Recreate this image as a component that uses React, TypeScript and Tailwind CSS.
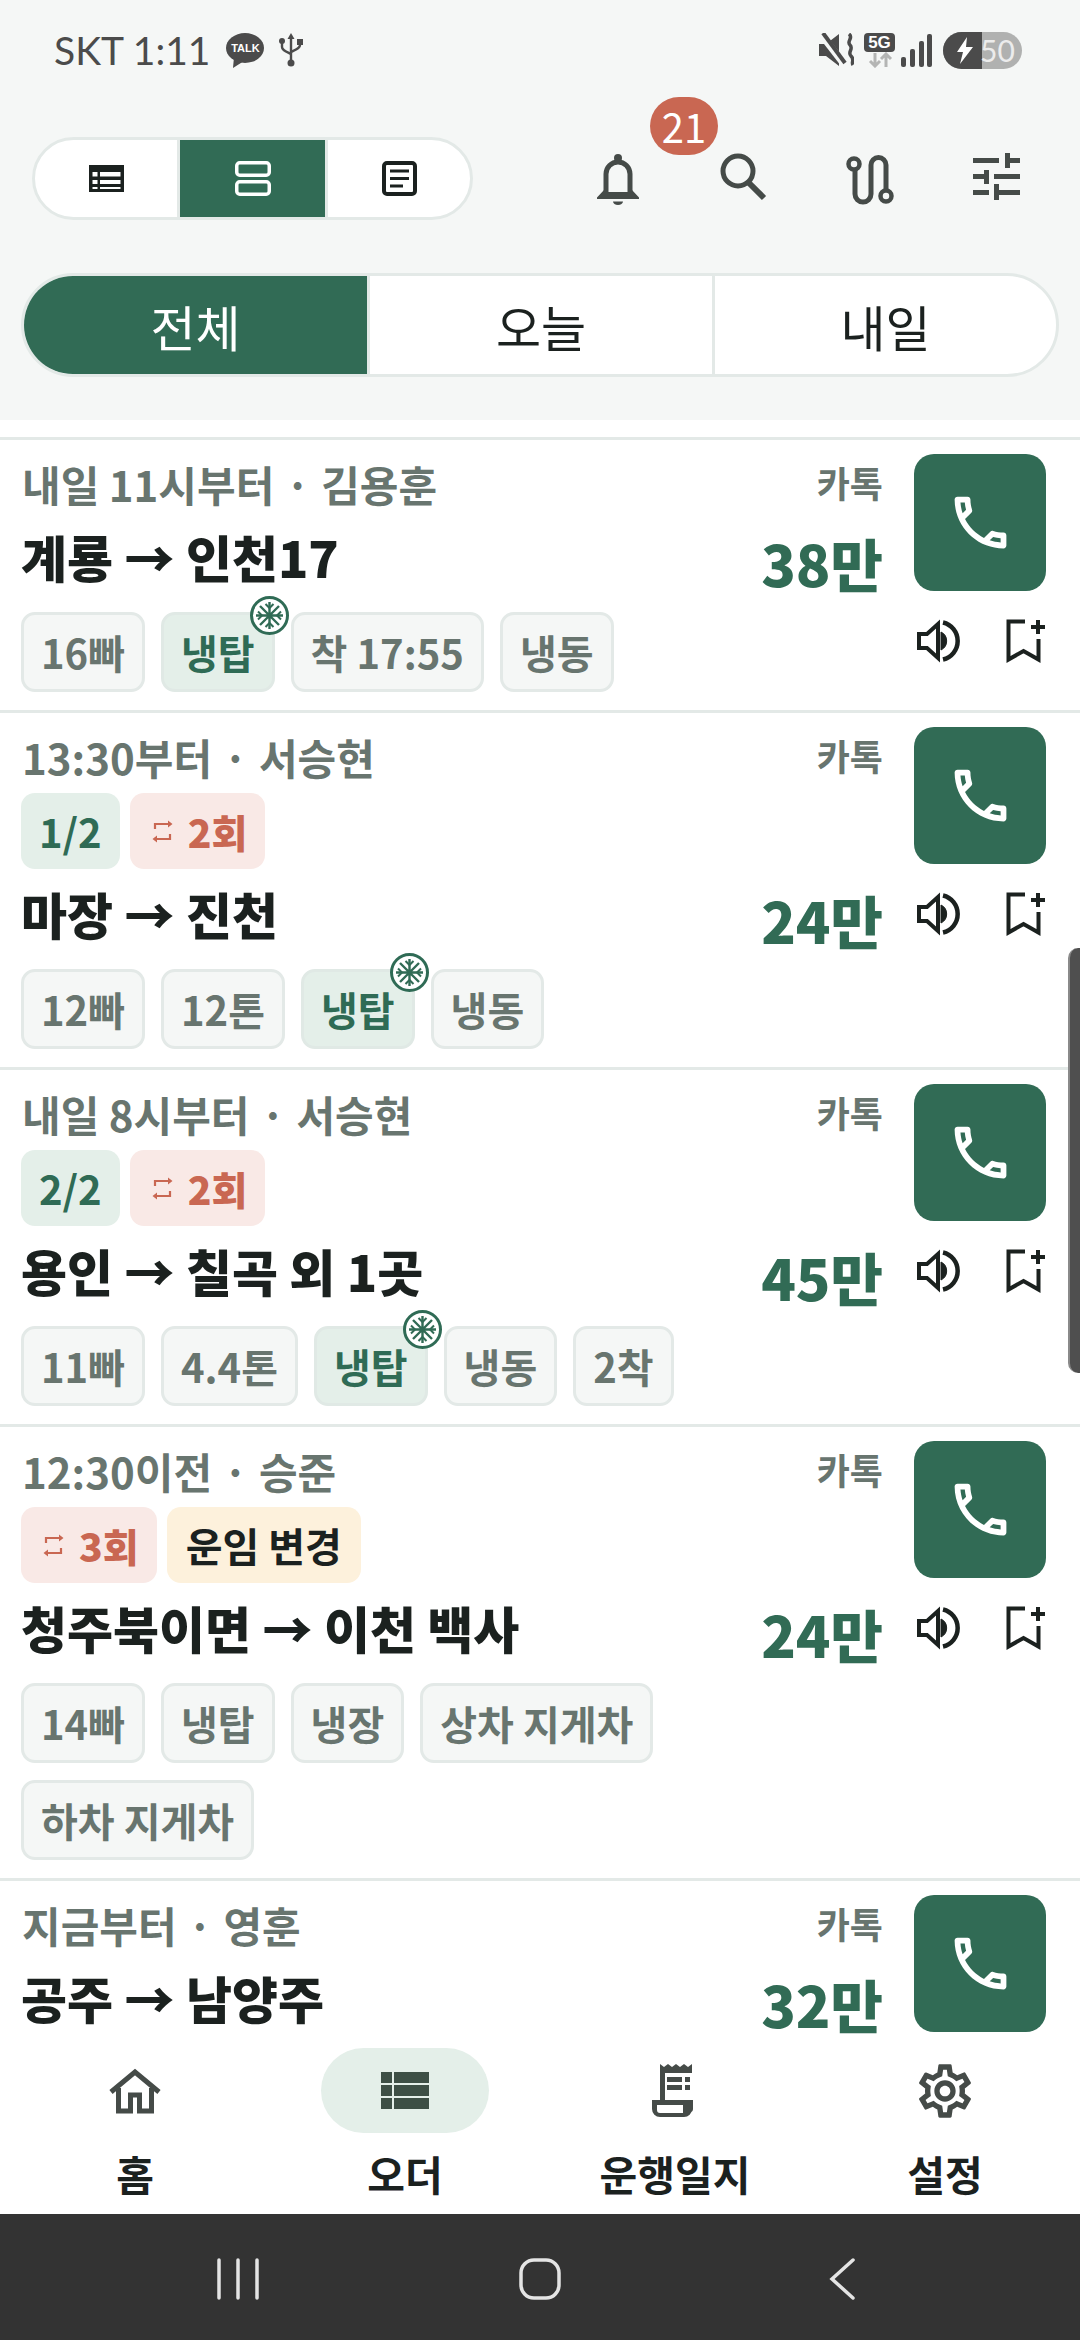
import React from "react";
import { MdOutlineSettings } from "react-icons/md";

const INK = "#1b211f";
const ICON = "#454b48";
const GREEN = "#316b55";
const RED = "#c96752";

type Tag = { t: string; cold?: boolean };
type Order = {
  time: string;
  who: string;
  share?: string;
  repeat?: string;
  note?: string;
  title: string;
  price: string;
  tags: Tag[];
};

const ORDERS: Order[] = [
  {
    time: "내일 11시부터",
    who: "김용훈",
    title: "계룡 → 인천17",
    price: "38만",
    tags: [{ t: "16빠" }, { t: "냉탑", cold: true }, { t: "착 17:55" }, { t: "냉동" }],
  },
  {
    time: "13:30부터",
    who: "서승현",
    share: "1/2",
    repeat: "2회",
    title: "마장 → 진천",
    price: "24만",
    tags: [{ t: "12빠" }, { t: "12톤" }, { t: "냉탑", cold: true }, { t: "냉동" }],
  },
  {
    time: "내일 8시부터",
    who: "서승현",
    share: "2/2",
    repeat: "2회",
    title: "용인 → 칠곡 외 1곳",
    price: "45만",
    tags: [{ t: "11빠" }, { t: "4.4톤" }, { t: "냉탑", cold: true }, { t: "냉동" }, { t: "2착" }],
  },
  {
    time: "12:30이전",
    who: "승준",
    repeat: "3회",
    note: "운임 변경",
    title: "청주북이면 → 이천 백사",
    price: "24만",
    tags: [{ t: "14빠" }, { t: "냉탑" }, { t: "냉장" }, { t: "상차 지게차" }, { t: "하차 지게차" }],
  },
  {
    time: "지금부터",
    who: "영훈",
    title: "공주 → 남양주",
    price: "32만",
    tags: [],
  },
];

function ListIcon({ color, w, h }: { color: string; w: number; h: number }) {
  return (
    <svg width={w} height={h} viewBox="0 0 35 27" fill={color}>
      <path d="M0 0h35v27H0z" />
      <path
        d="M3.500 7h5v4.500h-5zM11 7h20.500v4.500H11zM3.500 15h5v4h-5zM11 15h20.500v4H11zM3.500 22h5v2h-5zM11 22h20.500v2H11z"
        fill="#fff"
      />
    </svg>
  );
}

function CardsIcon() {
  return (
    <svg width="36" height="35" viewBox="0 0 36 35" fill="none" stroke="#fff" strokeWidth="3.500">
      <rect x="1.750" y="1.750" width="32.500" height="12.500" rx="3" />
      <rect x="1.750" y="20.750" width="32.500" height="12.500" rx="3" />
    </svg>
  );
}

function NoteIcon() {
  return (
    <svg width="35" height="35" viewBox="0 0 35 35" fill="none" stroke={INK}>
      <rect x="2" y="2" width="31" height="31" rx="3" strokeWidth="4" />
      <path d="M8 10h19M8 17.500h19M8 25h13" strokeWidth="3.200" />
    </svg>
  );
}

function Bell() {
  return (
    <svg width="44" height="52" viewBox="0 0 44 52" fill={ICON}>
      <path d="M10 41V21a12 12 0 0 1 24 0v20" fill="none" stroke={ICON} strokeWidth="5" />
      <circle cx="22" cy="5" r="4" />
      <path d="M1 44.500 8 37l1 2h26l1-2 7 7.500V46H1z" />
      <path d="M17 48.500h10a5 3.500 0 0 1-10 0z" />
    </svg>
  );
}

function Search() {
  return (
    <svg width="50" height="50" viewBox="0 0 50 50" fill="none" stroke={ICON}>
      <circle cx="19" cy="18" r="15" strokeWidth="5" />
      <path d="M29 29 45 45" strokeWidth="6" />
    </svg>
  );
}

function Route() {
  return (
    <svg width="50" height="52" viewBox="0 0 50 52" fill="none" stroke={ICON} strokeWidth="5">
      <circle cx="9" cy="11" r="5.500" strokeWidth="4.500" />
      <path d="M10 17v24a8 8 0 0 0 16 0V12a7.500 7.500 0 0 1 15 0v25" />
      <circle cx="41" cy="43" r="5.500" strokeWidth="4.500" />
    </svg>
  );
}

function Sliders() {
  return (
    <svg width="47" height="47" viewBox="0 0 47 47" fill={ICON}>
      <path d="M0 5h26v5H0zM32 0h5v15h-5zM37 5h10v5H37zM0 21h11v5H0zM11 17h5v14h-5zM21 21h26v5H21zM0 37h16v5H0zM21 31h5v16h-5zM26 37h21v5H26z" />
    </svg>
  );
}

function Phone() {
  return (
    <svg width="69" height="69" viewBox="0 0 24 24" fill="#fff">
      <path d="M6.540 5c.06.89.21 1.760.45 2.590l-1.200 1.200c-.41-1.200-.67-2.470-.76-3.790h1.510m9.860 12.020c.85.24 1.720.39 2.600.45v1.490c-1.320-.09-2.590-.35-3.800-.75l1.200-1.190M7.500 3H4c-.55 0-1 .45-1 1 0 9.390 7.610 17 17 17 .55 0 1-.45 1-1v-3.490c0-.55-.45-1-1-1-1.240 0-2.450-.2-3.570-.57-.1-.04-.21-.05-.31-.05-.26 0-.51.1-.71.29l-2.200 2.200c-2.830-1.450-5.150-3.760-6.590-6.590l2.200-2.200c.28-.28.36-.67.25-1.020C8.700 6.450 8.500 5.250 8.500 4c0-.55-.45-1-1-1z" />
    </svg>
  );
}

function Speaker() {
  return (
    <svg width="44" height="44" viewBox="0 0 44 44" fill="none" stroke={INK}>
      <path d="M3 15h8l11-10v34L11 29H3z" strokeWidth="4" />
      <path d="M25 13a10 10 0 0 1 0 18z" fill={INK} strokeWidth="1" />
      <path d="M27 3.500a19 19 0 0 1 0 37" strokeWidth="4.500" />
    </svg>
  );
}

function BookmarkPlus() {
  return (
    <svg width="40" height="44" viewBox="0 0 40 44" fill="none" stroke={INK}>
      <path d="M19 2.500H2.500v38L17.500 32l15 8.500V20" strokeWidth="4" />
      <path d="M32 1v14M25 8h14" strokeWidth="4" />
    </svg>
  );
}

function Repeat() {
  return (
    <svg width="21" height="25" viewBox="0 0 21 25" fill="none" stroke={RED} strokeWidth="2.200">
      <path d="M3 10V5h15M18 15v5H3" />
      <path d="M16 1.500 20.500 5 16 8.500zM5 16.500.5 20 5 23.500z" fill={RED} stroke="none" />
    </svg>
  );
}

function Snow() {
  return (
    <svg width="29" height="29" viewBox="0 0 29 29" fill="none" stroke={GREEN} strokeWidth="2.400">
      <path d="M14.500 1v27M1 14.500h27M5 5l19 19M24 5 5 24" />
      <path d="M10.500 3 14.500 7l4-4M10.500 26l4-4 4 4M3 10.500 7 14.500l-4 4M26 10.500l-4 4 4 4" strokeWidth="2" />
    </svg>
  );
}

function Chip({ tag }: { tag: Tag }) {
  if (tag.cold) {
    return (
      <div className="relative flex h-[80px] items-center rounded-[14px] border-[3px] border-[#e0e9e5] bg-[#e4efe9] px-[17px] text-[40px] font-semibold leading-none text-[#2f6b55]">
        {tag.t}
        <span className="absolute right-[-17px] top-[-19px] flex h-[39px] w-[39px] items-center justify-center rounded-full border-[3px] border-[#2f6b55] bg-white">
          <Snow />
        </span>
      </div>
    );
  }
  return (
    <div className="flex h-[80px] items-center rounded-[14px] border-[3px] border-[#e3e9e7] bg-[#f5f7f6] px-[17px] text-[40px] font-semibold leading-none text-[#68756f]">
      {tag.t}
    </div>
  );
}

function Card({ o }: { o: Order }) {
  const hasBadges = o.share || o.repeat || o.note;
  return (
    <div className="flex shrink-0 border-b-[3px] border-[#e3e9e7] pl-[21px] pr-[34px]">
      <div className="min-w-0 flex-1 pb-[18px] pt-[18px]">
        <div className="flex justify-between">
          <div>
            <div className="flex h-[54px] pl-[1px] text-[42px] font-semibold leading-[52px] text-[#68756f]">
              <span>{o.time}</span>
              <span className="mx-[11px]">·</span>
              <span>{o.who}</span>
            </div>
            {hasBadges && (
              <div className="mt-[8px] flex h-[76px] gap-[10px]">
                {o.share && (
                  <div className="flex items-center rounded-[14px] bg-[#e4efe9] px-[18px] text-[40px] font-semibold leading-none text-[#2f6b55]">
                    {o.share}
                  </div>
                )}
                {o.repeat && (
                  <div className="flex items-center gap-[15px] rounded-[14px] bg-[#f9e9e6] pl-[22px] pr-[18px] text-[39px] font-extrabold leading-none text-[#c96752]">
                    <Repeat />
                    {o.repeat}
                  </div>
                )}
                {o.note && (
                  <div className="flex items-center rounded-[14px] bg-[#fdf1dc] px-[19px] text-[40px] font-semibold leading-none text-[#1b211f]">
                    {o.note}
                  </div>
                )}
              </div>
            )}
            <div className="mt-[14px] h-[64px] text-[50px] font-black leading-[60px] text-[#1b211f]">{o.title}</div>
          </div>
          <div className="flex flex-col items-end justify-between pr-[31px]">
            <div className="h-[54px] text-[36px] font-semibold leading-[48px] text-[#68756f]">카톡</div>
            <div className="h-[60px] text-[57px] font-extrabold leading-[64px] text-[#316b55]">{o.price}</div>
          </div>
        </div>
        <div className="mt-[22px] flex flex-wrap gap-x-[16px] gap-y-[17px] pr-[33px]">
          {o.tags.map((t, i) => (
            <Chip key={i} tag={t} />
          ))}
        </div>
      </div>
      <div className="w-[132px] shrink-0 pt-[14px]">
        <div className="flex h-[137px] items-center justify-center rounded-[20px] bg-[#316b55]">
          <Phone />
        </div>
        {o.tags.length > 0 && (
          <div className="mt-[28px] flex justify-between pl-[2px]">
            <Speaker />
            <BookmarkPlus />
          </div>
        )}
      </div>
    </div>
  );
}

function StatusBar() {
  return (
    <div className="flex h-[100px] items-center justify-between pl-[54px] pr-[58px] text-[#4b4b4b]">
      <div className="flex items-center">
        <span className="font-['Lato',sans-serif] text-[39px] leading-none">SKT 1:11</span>
        <span className="relative ml-[16px] flex h-[35px] w-[38px] items-center justify-center">
          <svg className="absolute left-0 top-0" width="38" height="36" viewBox="0 0 38 36" fill="#4b4b4b">
            <ellipse cx="19" cy="15" rx="19" ry="15" />
            <path d="M8 24 7 35 18 28z" />
          </svg>
          <span className="relative top-[-2px] font-['Liberation_Sans',sans-serif] text-[11px] font-bold leading-none text-white">TALK</span>
        </span>
        <span className="ml-[15px]">
          <svg width="24" height="34" viewBox="0 0 24 34" fill="none" stroke="#4b4b4b" strokeWidth="2.400">
            <path d="M12 4v25M3 9v5c0 3 3 4 9 7M21 9v3c0 3-3 4-9 7" />
            <path d="M12 0l3.500 6h-7z" fill="#4b4b4b" stroke="none" />
            <circle cx="12" cy="30" r="3.500" fill="#4b4b4b" stroke="none" />
            <circle cx="3" cy="8" r="3" fill="#4b4b4b" stroke="none" />
            <path d="M18 6h6v6h-6z" fill="#4b4b4b" stroke="none" />
          </svg>
        </span>
      </div>
      <div className="flex items-center">
        <svg width="35" height="34" viewBox="0 0 35 34" fill="#4b4b4b">
          <path d="M0 11h7L20 1v32L7 23H0z" />
          <path d="M1 0 25 31" stroke="#f5f7f6" strokeWidth="7" />
          <path d="M4 0l22 30" stroke="#4b4b4b" strokeWidth="4" />
          <path d="M30 1c5 4-3 7 1 11s-3 7 1 11 0 6 2 9" fill="none" stroke="#4b4b4b" strokeWidth="3.500" />
        </svg>
        <div className="ml-[10px] flex w-[31px] flex-col items-center">
          <div className="flex h-[19px] w-[31px] items-center justify-center rounded-[4px] bg-[#4b4b4b] font-['Liberation_Sans',sans-serif] text-[17px] font-bold leading-none text-white">
            5G
          </div>
          <svg width="26" height="16" viewBox="0 0 26 16" fill="none" stroke="#b4b5b4" strokeWidth="3">
            <path d="M8 1v13M3 9l5 5 5-5M19 15V2M14 7l5-5 5 5" />
          </svg>
        </div>
        <svg className="ml-[6px]" width="31" height="33" viewBox="0 0 31 33" fill="#4b4b4b">
          <rect x="0" y="23" width="5" height="10" rx="2" />
          <rect x="9" y="15" width="5" height="18" rx="2" />
          <rect x="18" y="7" width="5" height="26" rx="2" />
          <rect x="26" y="0" width="5" height="33" rx="2" />
        </svg>
        <div className="ml-[11px] flex h-[37px] w-[79px] overflow-hidden rounded-full bg-[#b0b1b0]">
          <div className="flex w-[39px] items-center justify-center bg-[#4b4b4b] pl-[4px]">
            <svg width="18" height="27" viewBox="0 0 18 27" fill="#fff">
              <path d="M11 0 1 15h6L4 27l13-17h-7z" />
            </svg>
          </div>
          <span className="ml-[-2px] font-['Lato',sans-serif] text-[30px] leading-[37px] text-[#ececec]">50</span>
        </div>
      </div>
    </div>
  );
}

function Toolbar() {
  return (
    <div className="mt-[37px] flex h-[83px] items-center justify-between pl-[32px] pr-[21px]">
      <div className="flex h-[83px] w-[441px] overflow-hidden rounded-full border-[3px] border-[#e3e9e7] bg-white">
        <div className="flex flex-1 items-center justify-center border-r-[3px] border-[#e3e9e7]">
          <ListIcon color={INK} w={35} h={27} />
        </div>
        <div className="flex w-[145px] items-center justify-center bg-[#316b55]">
          <CardsIcon />
        </div>
        <div className="flex flex-1 items-center justify-center border-l-[3px] border-[#e3e9e7]">
          <NoteIcon />
        </div>
      </div>
      <div className="flex">
        <div className="relative flex w-[126px] justify-center">
          <Bell />
          <span className="absolute left-[95px] top-[-56px] flex h-[58px] w-[68px] items-center justify-center rounded-full bg-[#c96752] text-[40px] leading-none text-white">
            21
          </span>
        </div>
        <div className="flex w-[126px] justify-center">
          <Search />
        </div>
        <div className="flex w-[126px] justify-center">
          <Route />
        </div>
        <div className="flex w-[126px] justify-center">
          <Sliders />
        </div>
      </div>
    </div>
  );
}

function Tabs() {
  return (
    <div className="mx-[21px] mt-[53px] flex h-[104px] overflow-hidden rounded-full border-[3px] border-[#e3e9e7] bg-white text-[49px] leading-none">
      <div className="flex w-[343px] items-center justify-center bg-[#316b55] text-white">전체</div>
      <div className="flex flex-1 items-center justify-center border-l-[3px] border-[#e3e9e7] text-[#1b211f]">오늘</div>
      <div className="flex w-[344px] items-center justify-center border-l-[3px] border-[#e3e9e7] text-[#1b211f]">내일</div>
    </div>
  );
}

function NavItem({ label, active, children }: { label: string; active?: boolean; children: React.ReactNode }) {
  return (
    <div className="flex flex-col items-center">
      <div className={active ? "flex h-[85px] w-[168px] items-center justify-center rounded-full bg-[#e4efe9]" : "flex h-[85px] w-[168px] items-center justify-center"}>
        {children}
      </div>
      <div className="mt-[16px] text-[41px] font-bold leading-[48px] text-[#1b211f]">{label}</div>
    </div>
  );
}

export default function App() {
  return (
    <div className="relative flex h-[2340px] w-[1080px] flex-col overflow-hidden bg-white font-['Noto_Sans_CJK_KR','Noto_Sans',sans-serif]">
      <div className="h-[420px] shrink-0 bg-[#f5f7f6]">
        <StatusBar />
        <Toolbar />
        <Tabs />
      </div>
      <div className="flex min-h-0 flex-1 flex-col overflow-hidden pt-[17px]">
        <div className="h-[3px] shrink-0 bg-[#e3e9e7]" />
        {ORDERS.map((o, i) => (
          <Card key={i} o={o} />
        ))}
      </div>
      <div className="grid h-[178px] shrink-0 grid-cols-4 bg-white pt-[12px]">
        <NavItem label="홈">
          <svg width="52" height="46" viewBox="0 0 52 46" fill="none" stroke={ICON} strokeWidth="5">
            <path d="M2 24 26 4l24 20" />
            <path d="M9.500 20v23H21.500V27h9v16H42.500V20" />
          </svg>
        </NavItem>
        <NavItem label="오더" active>
          <svg width="48" height="37" viewBox="0 0 48 37" fill="#3d4f45">
            <path d="M0 0h11v11H0zM13 0h35v11H13zM0 13h11v11H0zM13 13h35v11H13zM0 26h11v11H0zM13 26h35v11H13z" />
          </svg>
        </NavItem>
        <NavItem label="운행일지">
          <svg width="47" height="53" viewBox="0 0 47 53" fill={ICON}>
            <path d="M8 0l4 3 4-3 4 3 4-3 4 3 4-3 4 3 4-3v45a8 8 0 0 1-8 8H8a8 8 0 0 1-8-8V36h8z" />
            <path d="M13 9h28v27H13zM5 41h26v8H8a3 3 0 0 1-3-3z" fill="#fff" />
            <path d="M15 13h15v5H15zM33 13h5v5h-5zM15 21h15v5H15zM33 21h5v5h-5zM36 36h5v9a3 3 0 0 1-3 3h-2z" />
          </svg>
        </NavItem>
        <NavItem label="설정">
          <MdOutlineSettings size={64} color={ICON} />
        </NavItem>
      </div>
      <div className="flex h-[126px] shrink-0 items-center justify-center bg-[#333333] pt-[3px]">
        <div className="grid w-[906px] grid-cols-3 place-items-center">
          <svg width="42" height="42" viewBox="0 0 42 42" stroke="#e4e4e4" strokeWidth="3.500" strokeLinecap="round">
            <path d="M2 2v38M21 2v38M40 2v38" />
          </svg>
          <svg width="42" height="42" viewBox="0 0 42 42" fill="none" stroke="#e4e4e4" strokeWidth="3.500">
            <rect x="2" y="2" width="38" height="38" rx="13" />
          </svg>
          <svg width="26" height="42" viewBox="0 0 26 42" fill="none" stroke="#e4e4e4" strokeWidth="3.500" strokeLinecap="round">
            <path d="M24 2 3 21l21 19" />
          </svg>
        </div>
      </div>
      <div className="absolute right-0 top-[948px] h-[425px] w-[12px] rounded-l-[10px] border-l-[2px] border-[#8a8a8a] bg-[#4f4f4f]" />
    </div>
  );
}
